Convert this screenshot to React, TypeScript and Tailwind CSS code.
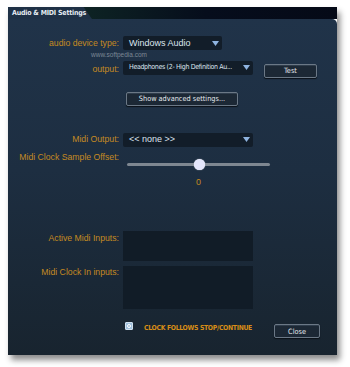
const label = "whitespace-nowrap text-right text-[#c58a22] text-[8.7px] leading-none [font-family:'Liberation_Sans',Arial,sans-serif]";
const cond = "[font-family:'DejaVu_Sans_Condensed','DejaVu_Sans',sans-serif]";

function Arrow() {
  return (
    <svg width="7" height="5" viewBox="0 0 7 5" className="shrink-0">
      <path d="M0 0 L7 0 L3.5 5 Z" fill="#8fb4e0" />
    </svg>
  );
}

function Select({ text, w, small }: { text: string; w: string; small?: boolean }) {
  return (
    <div
      className={`${w} flex h-[14px] items-center justify-between rounded-[2px] bg-[#121d29] pl-[6px] pr-[3px] text-[#dce4ee] ${
        small ? `pl-[5px] text-[7px] tracking-[-0.35px] ${cond}` : "text-[9px] [font-family:'Liberation_Sans',Arial,sans-serif]"
      }`}
    >
      <span className="whitespace-nowrap leading-none">{text}</span>
      <Arrow />
    </div>
  );
}

function Button({ text, w }: { text: string; w: string }) {
  return (
    <div
      className={`${w} flex h-[14px] items-center justify-center whitespace-nowrap rounded-[2px] border border-[#6b7886] bg-[#1c2835] text-[7.3px] leading-none text-[#e4e9ef] shadow-[inset_0_1px_0_#2f3d4c,0_1px_1px_#0a1118] ${cond}`}
    >
      {text}
    </div>
  );
}

export default function App() {
  return (
    <div className="h-[367px] w-[350px] bg-white pl-[8px] pt-[7px]">
      <div className="flex h-[348px] w-[329px] flex-col shadow-[3px_5px_6px_rgba(0,0,0,0.45)]">
        {/* title strip */}
        <div className="flex h-[12px] bg-[linear-gradient(90deg,#123028_0%,#0c1f22_30%,#060d1c_60%,#050a17_100%)]">
          <div className="flex w-[84px] items-center whitespace-nowrap bg-[#1f3146] pl-[4px] text-[7px] font-bold leading-none tracking-[-0.2px] text-[#e6ecf2] [clip-path:polygon(0_0,90%_0,100%_100%,0_100%)] [font-family:'DejaVu_Sans_Condensed','DejaVu_Sans',sans-serif]">
            Audio &amp; MIDI Settings
          </div>
        </div>

        {/* body */}
        <div className="flex flex-1 flex-col rounded-tr-[5px] bg-[linear-gradient(180deg,#203349_0%,#1d2e41_45%,#18242f_100%)]">
          <div className="mt-[17px] flex items-center gap-[4px]">
            <div className={`w-[111px] ${label}`}>audio device type:</div>
            <Select text="Windows Audio" w="w-[99px]" />
          </div>
          <div className="ml-[83px] mt-[2px] text-[6.5px] leading-none text-[#7c8896] [font-family:'Liberation_Sans',Arial,sans-serif]">
            www.softpedia.com
          </div>
          <div className="mt-[2px] flex items-start gap-[4px]">
            <div className={`w-[111px] pt-[4px] ${label}`}>output:</div>
            <Select text="Headphones (2- High Definition Au..." w="w-[130px]" small />
            <div className="ml-[7px] mt-[3px]">
              <Button text="Test" w="w-[53px]" />
            </div>
          </div>
          <div className="ml-[118px] mt-[14px]">
            <Button text="Show advanced settings..." w="w-[112px]" />
          </div>

          <div className="mt-[27px] flex items-center gap-[4px]">
            <div className={`w-[111px] ${label}`}>Midi Output:</div>
            <Select text="<< none >>" w="w-[130px]" />
          </div>
          <div className="mt-[6px] flex items-start gap-[4px]">
            <div className={`w-[111px] ${label}`}>Midi Clock Sample Offset:</div>
          </div>
          <div className="ml-[119px] mt-[2px] flex w-[143px] items-center">
            <div className="relative h-[3px] w-full rounded-full bg-[#7e8791]">
              <div className="absolute left-[67px] top-[-4px] h-[11px] w-[11px] rounded-full bg-[#e4e6fb] shadow-[0_0_1px_#fff]" />
            </div>
          </div>
          <div className="ml-[188px] mt-[12px] text-[9px] leading-none text-[#c58a22] [font-family:'Liberation_Sans',Arial,sans-serif]">
            0
          </div>

          <div className="mt-[44px] flex items-start gap-[4px]">
            <div className={`w-[111px] pt-[3px] ${label}`}>Active Midi Inputs:</div>
            <div className="h-[30px] w-[130px] bg-[#111c27]" />
          </div>
          <div className="mt-[5px] flex items-start gap-[4px]">
            <div className={`w-[111px] pt-[2px] ${label}`}>Midi Clock In inputs:</div>
            <div className="h-[43px] w-[130px] bg-[#111c27]" />
          </div>

          <div className="mt-[13px] flex items-start">
            <div className="ml-[117px] flex h-[8px] w-[8px] items-center justify-center rounded-[1px] border border-[#cfe0ef] bg-[#9fc0dc]">
              <div className="h-[4px] w-[4px] rounded-full border border-white" />
            </div>
            <div className={`ml-[11px] mt-[3px] whitespace-nowrap text-[6.8px] font-bold leading-none tracking-[-0.3px] text-[#d98e16] ${cond}`}>
              CLOCK FOLLOWS STOP/CONTINUE
            </div>
            <div className="ml-auto mr-[17px] mt-[2px]">
              <Button text="Close" w="w-[46px]" />
            </div>
          </div>
        </div>
      </div>
    </div>
  );
}
